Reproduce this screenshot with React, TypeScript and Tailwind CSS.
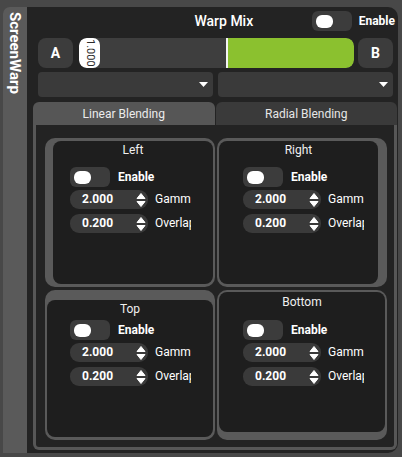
import React from "react";

function Toggle() {
  return (
    <div className="w-[40px] h-[20px] rounded-[6px] bg-[#3c3c3c] flex items-center pl-[4px]">
      <div className="w-[17px] h-[13px] rounded-[6px] bg-white" />
    </div>
  );
}

function Spinner() {
  return (
    <svg width="10" height="16" viewBox="0 0 10 16">
      <path d="M1 6.5 L5 1.5 L9 6.5 Z" fill="#ffffff" strokeLinejoin="round" stroke="#ffffff" strokeWidth="1" />
      <path d="M1 9.5 L5 14.5 L9 9.5 Z" fill="#ffffff" strokeLinejoin="round" stroke="#ffffff" strokeWidth="1" />
    </svg>
  );
}

function Field({ value, label, className }: { value: string; label: string; className: string }) {
  return (
    <div className={"flex items-center " + className}>
      <div className="w-[78px] h-[19px] rounded-[9px] bg-[#3a3a3a] flex items-center pl-[12px] pr-[2px]">
        <span className="flex-1 text-[12px] leading-[19px] font-bold text-white">{value}</span>
        <Spinner />
      </div>
      <div className="ml-[7px] w-[36px] overflow-hidden whitespace-nowrap text-[12px] leading-[19px] text-white">
        {label}
      </div>
    </div>
  );
}

function Panel({
  title,
  outer,
  titleCls,
  contentCls,
}: {
  title: string;
  outer: string;
  titleCls: string;
  contentCls: string;
}) {
  return (
    <div className={"bg-[#5a5a5a] rounded-[10px] flex " + outer}>
      <div className="flex-1 bg-[#1e1e1e] rounded-[8px] flex flex-col">
        <div className={"text-center text-[12px] leading-[16px] text-[#f0f0f0] " + titleCls}>{title}</div>
        <div className={"flex flex-col " + contentCls}>
          <div className="flex items-center">
            <Toggle />
            <span className="ml-[8px] text-[12px] font-bold text-white leading-[20px]">Enable</span>
          </div>
          <Field value="2.000" label="Gamma" className="mt-[3px]" />
          <Field value="0.200" label="Overlap" className="mt-[5px]" />
        </div>
      </div>
    </div>
  );
}

export default function App() {
  return (
    <div className="w-[402px] h-[457px] bg-[#484848] flex pt-[7px] pl-[3px] pr-[4px] pb-[4px] font-['Roboto','Liberation_Sans',sans-serif]">
      <div className="w-[24px] bg-[#5a5a5a] rounded-tl-[7px] flex justify-center pt-[5px]">
        <span className="[writing-mode:vertical-rl] text-[15px] font-bold text-white leading-[24px]">
          ScreenWarp
        </span>
      </div>
      <div className="flex-1 bg-[#232323] rounded-r-[10px] flex flex-col pl-[6px] pr-[1px] pb-[3px]">
        {/* title row */}
        <div className="h-[28px] flex items-center pl-[5px] pr-[2px]">
          <div className="flex-1 pl-[98px] text-center text-[14px] font-medium text-white">Warp Mix</div>
          <Toggle />
          <span className="ml-[7px] text-[12px] font-bold text-white">Enable</span>
        </div>
        {/* slider row */}
        <div className="mt-[3px] h-[30px] flex pl-[5px] pr-[4px]">
          <div className="w-[35px] rounded-[8px] bg-[#3c3c3c] flex items-center justify-center text-[14px] font-bold text-white">
            A
          </div>
          <div className="ml-[6px] flex-1 rounded-[8px] bg-[#3e3e3e] flex overflow-hidden">
            <div className="w-[21px] bg-white rounded-[7px] flex items-center justify-center">
              <span className="[writing-mode:vertical-rl] text-[11px] leading-[12px] text-[#2a2a2a]">1.000</span>
            </div>
            <div className="w-[126px]" />
            <div className="w-[2px] bg-[#f4f4f4]" />
            <div className="flex-1 bg-[#8bc12f] rounded-r-[8px]" />
          </div>
          <div className="ml-[4px] w-[35px] rounded-[8px] bg-[#3c3c3c] flex items-center justify-center text-[14px] font-bold text-white">
            B
          </div>
        </div>
        {/* dropdown row */}
        <div className="mt-[4px] h-[25px] flex gap-[5px] pl-[5px] pr-[4px]">
          <div className="flex-1 rounded-[4px] bg-[#3a3a3a] flex items-center justify-end pr-[5px]">
            <svg width="9" height="5" viewBox="0 0 9 5">
              <path d="M0 0 L9 0 L4.5 5 Z" fill="#ffffff" />
            </svg>
          </div>
          <div className="flex-1 rounded-[4px] bg-[#3a3a3a] flex items-center justify-end pr-[5px]">
            <svg width="9" height="5" viewBox="0 0 9 5">
              <path d="M0 0 L9 0 L4.5 5 Z" fill="#ffffff" />
            </svg>
          </div>
        </div>
        {/* tabs */}
        <div className="mt-[5px] h-[23px] flex gap-[1px]">
          <div className="flex-1 rounded-t-[6px] bg-[#565656] flex items-center justify-center text-[12px] text-[#ececec]">
            Linear Blending
          </div>
          <div className="flex-1 rounded-t-[6px] bg-[#3a3a3a] flex items-center justify-center text-[12px] text-[#e6e6e6]">
            Radial Blending
          </div>
        </div>
        {/* content */}
        <div className="flex-1 border-x-[3px] border-b-[3px] border-[#575757] rounded-b-[6px] pt-[13px] pl-[9px] pr-[7px] pb-[7px] grid grid-cols-2 grid-rows-[149px_150px] gap-x-[2px] gap-y-[3px]">
          <Panel
            title="Left"
            outer="pl-[8px] pt-[3px] pr-[2px] pb-[3px]"
            titleCls="pt-[1px]"
            contentCls="mt-[9px] ml-[17px]"
          />
          <Panel
            title="Right"
            outer="pl-[2px] pt-[3px] pr-[9px] pb-[3px]"
            titleCls="pt-[1px]"
            contentCls="mt-[9px] ml-[24px]"
          />
          <Panel
            title="Top"
            outer="pl-[2px] pt-[10px] pr-[2px] pb-[3px]"
            titleCls="pt-[1px]"
            contentCls="mt-[3px] ml-[23px]"
          />
          <Panel
            title="Bottom"
            outer="pl-[2px] pt-[2px] pr-[2px] pb-[8px]"
            titleCls="pt-[2px]"
            contentCls="mt-[10px] ml-[24px]"
          />
        </div>
      </div>
    </div>
  );
}
